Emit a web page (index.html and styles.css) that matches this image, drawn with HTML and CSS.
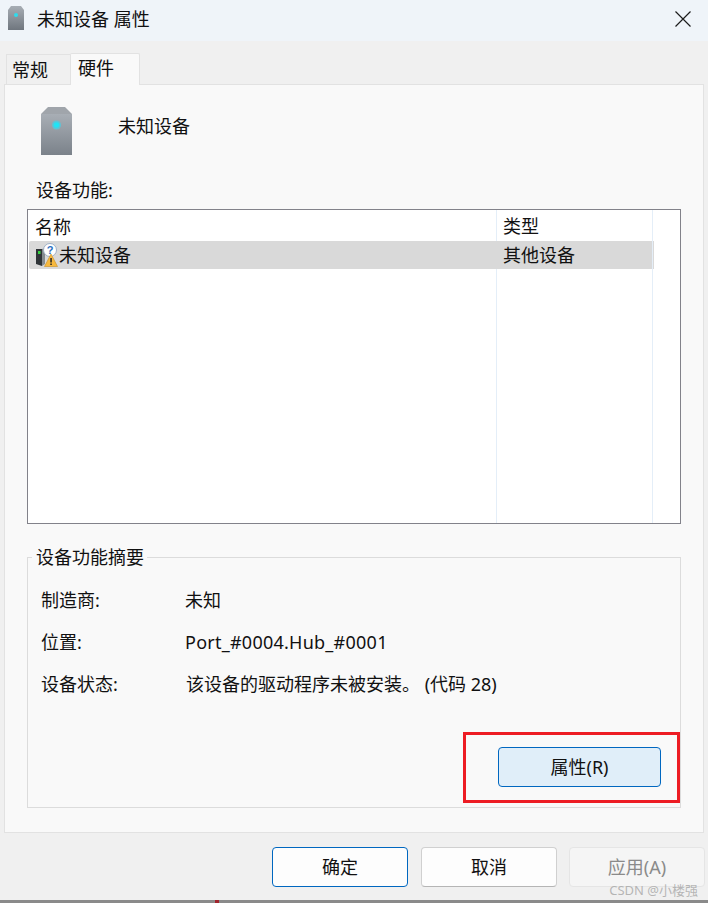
FILE: index.html
```html
<!DOCTYPE html>
<html lang="zh">
<head>
<meta charset="utf-8">
<title>未知设备 属性</title>
<link rel="stylesheet" href="styles.css">
</head>
<body>
<div class="window">
  <header class="titlebar">
    <svg class="title-icon" width="16" height="25" viewBox="0 0 16 25">
      <defs><linearGradient id="tg" x1="0" y1="0" x2="0" y2="1"><stop offset="0" stop-color="#a7adb4"/><stop offset="1" stop-color="#6f767e"/></linearGradient></defs>
      <path d="M0 4 3 0H13L16 4V24H0Z" fill="url(#tg)"/>
      <circle cx="8" cy="9" r="2" fill="#2fdcec"/>
    </svg>
    <span class="title-text">未知设备 属性</span>
    <svg class="close" width="16" height="16" viewBox="0 0 16 16"><path d="M.5.5 15.5 15.5M15.5.5.5 15.5" stroke="#1c1c1c" stroke-width="1.2" fill="none"/></svg>
  </header>
  <nav class="tabs">
    <div class="tab">常规</div>
    <div class="tab tab-active">硬件</div>
  </nav>
  <main class="panel">
    <div class="device-head">
      <svg width="31" height="48" viewBox="0 0 31 48">
        <defs><linearGradient id="dg" x1="0" y1="0" x2="0" y2="1"><stop offset="0" stop-color="#a8aeb5"/><stop offset="1" stop-color="#7b828a"/></linearGradient></defs>
        <path d="M0 7 7 0H24L31 7Z" fill="#a0a5ab"/>
        <rect y="7" width="31" height="41" fill="url(#dg)"/>
        <circle cx="15.5" cy="18" r="4.5" fill="#5ec3d6"/>
        <circle cx="15.5" cy="18" r="2.8" fill="#22e3f4"/>
      </svg>
      <span class="device-name">未知设备</span>
    </div>
    <div class="section-label">设备功能:</div>
    <div class="list">
      <div class="list-row list-header">
        <div class="col-name">名称</div>
        <div class="col-type">类型</div>
      </div>
      <div class="list-row list-selected">
        <div class="col-name">
          <svg class="row-icon" width="24" height="24" viewBox="0 0 24 24">
            <path d="M1 6H7V23L1 21Z" fill="#2f3438"/>
            <path d="M7 6 10 5V21L7 23Z" fill="#858b90"/>
            <rect x="3" y="8" width="2.5" height="3" fill="#35d33f"/>
            <circle cx="15" cy="7" r="6.5" fill="#fff" stroke="#9fb0c6"/>
            <text class="q" x="15" y="11" text-anchor="middle">?</text>
            <path d="M16 11 22.500 23.500H9.500Z" fill="#f7b93e" stroke="#c98e22" stroke-width=".6"/>
            <rect x="15.300" y="15" width="1.500" height="4.500" fill="#222"/>
            <rect x="15.300" y="20.500" width="1.500" height="1.500" fill="#222"/>
          </svg>未知设备</div>
        <div class="col-type">其他设备</div>
      </div>
    </div>
    <fieldset class="summary">
      <legend class="summary-legend">设备功能摘要</legend>
      <dl class="props">
        <dt>制造商:</dt><dd>未知</dd>
        <dt>位置:</dt><dd class="latin">Port_#0004.Hub_#0001</dd>
        <dt>设备状态:</dt><dd class="status">该设备的驱动程序未被安装。 (代码 28)</dd>
      </dl>
      <div class="summary-actions">
        <div class="highlight"><button class="btn btn-hot" type="button">属性(R)</button></div>
      </div>
    </fieldset>
  </main>
  <footer class="footer">
    <button class="btn btn-default" type="button">确定</button>
    <button class="btn" type="button">取消</button>
    <button class="btn btn-disabled" type="button">应用(A)</button>
  </footer>
  <div class="strip"><span class="strip-mark"></span></div>
  <div class="watermark">CSDN @小楼强</div>
</div>
</body>
</html>
```
FILE: styles.css
```css
* { box-sizing: border-box; }
html, body { margin: 0; padding: 0; }
body {
  font-family: "Noto Sans", "Noto Sans CJK SC", sans-serif;
  font-size: 18px;
  color: #111;
  background: #f0f0f0;
}
.window {
  position: relative;
  width: 708px;
  height: 903px;
  display: flex;
  flex-direction: column;
  background: #f0f0f0;
  overflow: hidden;
}
.titlebar {
  height: 41px;
  flex: none;
  display: flex;
  align-items: center;
  background: #eff4f9;
  padding: 0 17px 0 8px;
}
.title-icon { margin-top: -5px; }
.title-text { margin-left: 13px; line-height: 24px; margin-top: -4px; flex: 1; }
.close { margin-top: -4px; }
.tabs {
  height: 43px;
  flex: none;
  display: flex;
  align-items: flex-end;
  padding-left: 6px;
  position: relative;
  z-index: 1;
}
.tab {
  width: 64px;
  height: 30px;
  margin-bottom: 0;
  border: 1px solid #e2e2e2;
  border-bottom: 0;
  border-right: 0;
  padding-left: 5px;
  line-height: 30px;
  background: #f0f0f0;
}
.tab-active {
  width: 70px;
  height: 32px;
  background: #f9f9f9;
  border-right: 1px solid #e2e2e2;
  border-radius: 2px 2px 0 0;
  margin-bottom: -1px;
  padding-left: 7px;
  line-height: 28px;
}
.panel {
  height: 749px;
  flex: none;
  margin: 0 4px;
  background: #f9f9f9;
  border: 1px solid #e2e2e2;
  padding: 22px 22px 24px;
}
.device-head {
  height: 48px;
  display: flex;
  align-items: center;
  padding-left: 14px;
}
.device-name { margin-left: 46px; margin-top: -12px; }
.section-label { margin: 22px 0 0 9px; line-height: 26px; height: 32px; }
.list {
  height: 315px;
  background: #fff linear-gradient(#e4eef8, #e4eef8) no-repeat 468px 0 / 1px 100%;
  border: 1px solid #82828a;
  padding: 0 1px;
  position: relative;
}
.list::after {
  content: "";
  position: absolute;
  top: 0;
  bottom: 0;
  left: 624px;
  width: 1px;
  background: #e4eef8;
}
.list-row {
  width: 624px;
  display: flex;
  line-height: 27px;
}
.list-header { height: 31px; padding-top: 3px; }
.list-selected { width: 625px; height: 28px; background: #d9d9d9; border-radius: 2px 0 0 2px; line-height: 28px; }
.col-name { width: 467px; padding-left: 6px; flex: none; display: flex; align-items: center; }
.col-type { padding-left: 7px; }
.row-icon { flex: none; }
.q { font: bold 11px "Liberation Sans", sans-serif; fill: #2a6fc2; }
.summary {
  margin: 20px 0 0;
  padding: 0;
  height: 264px;
  border: 1px solid #dcdcdc;
  min-width: 0;
}
.summary-legend { margin-left: 4px; padding: 0 3px 0 4px; line-height: 26px; height: 26px; }
.props {
  margin: 17px 0 0 13px;
  display: grid;
  grid-template-columns: 144px 1fr;
  row-gap: 16px;
  line-height: 26px;
}
.props dt, .props dd { margin: 0; height: 26px; }
.latin { letter-spacing: .25px; }
.status { padding-left: 1px; }
.summary-actions {
  display: flex;
  justify-content: flex-end;
  margin-top: 35px;
}
.highlight {
  width: 217px;
  height: 71px;
  border: 3px solid #ed1c24;
  padding: 12px 16px 0 32px;
}
.btn {
  width: 136px;
  height: 40px;
  font: inherit;
  color: #111;
  background: #fdfdfd;
  border: 1px solid #d0d0d0;
  border-bottom-color: #b5b5b5;
  border-radius: 4px;
  padding: 0 0 2px;
}
.btn-hot {
  width: 163px;
  background: #e0eef9;
  border: 1px solid #0067c0;
}
.btn-default { border: 1.500px solid #0067c0; }
.btn-disabled {
  margin-left: -1px;
  background: #f5f5f5;
  border-color: #e5e5e5;
  color: #8a8a8a;
}
.footer {
  height: 67px;
  flex: none;
  display: flex;
  justify-content: flex-end;
  align-items: flex-start;
  gap: 13px;
  padding: 14px 3px 0 0;
}
.strip {
  height: 3px;
  flex: none;
  background: #8a8a8a;
  padding-left: 215px;
}
.strip-mark { display: block; width: 4px; height: 3px; background: #a0242c; }
.watermark {
  position: absolute;
  right: 10px;
  bottom: 4px;
  font-size: 13px;
  line-height: 18px;
  color: rgba(170, 170, 170, 0.85);
}
```
